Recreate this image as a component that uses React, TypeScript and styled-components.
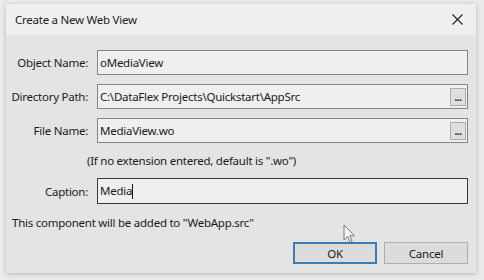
import React from "react";
import styled, { createGlobalStyle } from "styled-components";

const Global = createGlobalStyle`
  html, body { margin: 0; padding: 0; }
  body {
    background: #ebebeb;
    font-family: "Noto Sans", "Open Sans", sans-serif;
    color: #1a1a1a;
  }
`;

const Page = styled.div`
  position: relative;
  width: 484px;
  height: 280px;
  padding: 4px 0 0 6px;
  box-sizing: border-box;
  overflow: hidden;
  background: #ebebeb;
`;

const Dialog = styled.div`
  width: 470px;
  height: 269px;
  background: #e4e4e4;
  box-shadow: 0 1px 5px rgba(0, 0, 0, 0.22);
  display: flex;
  flex-direction: column;
  box-sizing: border-box;
  font-size: 11.5px;
  letter-spacing: -0.25px;
`;

const TitleBar = styled.div`
  height: 31px;
  flex: none;
  background: #efefef;
  display: flex;
  align-items: center;
  justify-content: space-between;
  padding: 0 9px 0 9px;
  color: #222;
`;

const Close = styled.svg`
  width: 11px;
  height: 11px;
  margin-right: 4px;
`;

const Form = styled.div`
  display: grid;
  grid-template-columns: 82px 1fr;
  column-gap: 9px;
  row-gap: 9px;
  padding: 15px 8px 0 0;
`;

const Label = styled.div`
  display: flex;
  align-items: center;
  justify-content: flex-end;
  white-space: nowrap;
`;

const TextBox = styled.div<{ $focused?: boolean; $h?: number }>`
  height: ${(p) => p.$h ?? 25}px;
  box-sizing: border-box;
  border: 1px solid ${(p) => (p.$focused ? "#3a3a3a" : "#858585")};
  background: #efefef;
  display: flex;
  align-items: center;
  justify-content: space-between;
  padding: 0 1px 0 2px;
  white-space: nowrap;
`;

const Caret = styled.span`
  display: inline-block;
  width: 1px;
  height: 15px;
  background: #111;
  vertical-align: middle;
`;

const Ellipsis = styled.div`
  width: 16px;
  height: 18px;
  box-sizing: border-box;
  border: 1px solid #adadad;
  background: #dedede;
  font-size: 10px;
  font-weight: bold;
  display: flex;
  align-items: flex-end;
  justify-content: center;
  line-height: 1;
  padding-bottom: 3px;
  letter-spacing: -0.5px;
  color: #222;
`;

const Hint = styled.div`
  grid-column: 1 / -1;
  height: 17px;
  display: flex;
  align-items: center;
  padding-left: 81px;
  white-space: nowrap;
`;

const Note = styled.div`
  margin: 10px 0 0 6px;
  height: 16px;
  display: flex;
  align-items: center;
`;

const Buttons = styled.div`
  display: flex;
  justify-content: flex-end;
  gap: 7px;
  padding: 12px 8px 0 0;
`;

const Button = styled.div<{ $default?: boolean }>`
  width: 84px;
  height: 22px;
  box-sizing: border-box;
  border: ${(p) => (p.$default ? "2px solid #3d7ab6" : "1px solid #adadad")};
  background: #dcdcdc;
  display: flex;
  align-items: center;
  justify-content: center;
`;

const Cursor = styled.svg`
  position: absolute;
  left: 343px;
  top: 224px;
  width: 14px;
  height: 21px;
  opacity: 0.75;
`;

export default function App() {
  return (
    <>
      <Global />
      <Page>
        <Dialog>
          <TitleBar>
            <span>Create a New Web View</span>
            <Close viewBox="0 0 11 11">
              <path d="M0.5 0.5 L10.5 10.5 M10.5 0.5 L0.5 10.5" stroke="#222" strokeWidth="1.1" />
            </Close>
          </TitleBar>
          <Form>
            <Label>Object Name:</Label>
            <TextBox>oMediaView</TextBox>
            <Label>Directory Path:</Label>
            <TextBox>
              <span>C:\DataFlex Projects\Quickstart\AppSrc</span>
              <Ellipsis>...</Ellipsis>
            </TextBox>
            <Label>File Name:</Label>
            <TextBox>
              <span>MediaView.wo</span>
              <Ellipsis>...</Ellipsis>
            </TextBox>
            <Hint>(If no extension entered, default is ".wo")</Hint>
            <Label>Caption:</Label>
            <TextBox $focused $h={26}>
              <span>
                Media
                <Caret />
              </span>
            </TextBox>
          </Form>
          <Note>This component will be added to "WebApp.src"</Note>
          <Buttons>
            <Button $default>OK</Button>
            <Button>Cancel</Button>
          </Buttons>
        </Dialog>
        <Cursor viewBox="0 0 14 21">
          <path
            d="M1 1 L1 16 L4.5 12.5 L7 18.5 L9.2 17.6 L6.8 11.8 L11.5 11.8 Z"
            fill="#fafafa"
            stroke="#555"
            strokeWidth="1"
            strokeLinejoin="round"
          />
        </Cursor>
      </Page>
    </>
  );
}
